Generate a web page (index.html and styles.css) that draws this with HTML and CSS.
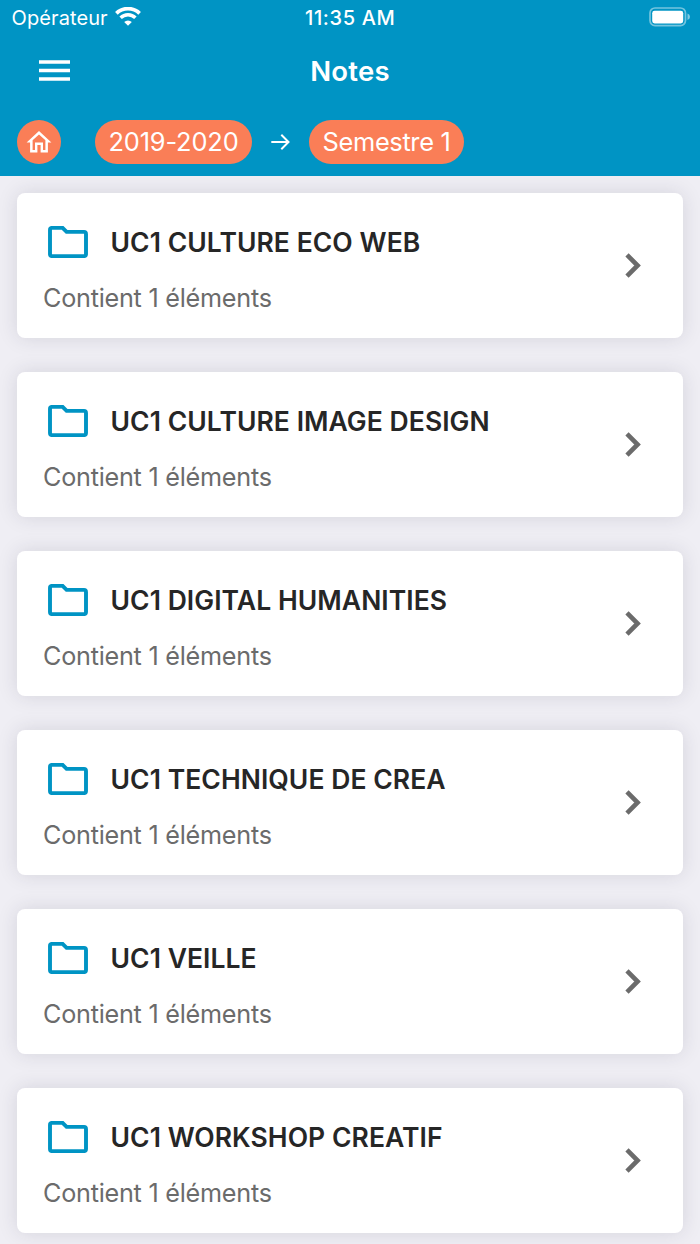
FILE: index.html
```html
<!DOCTYPE html>
<html lang="fr">
<head>
<meta charset="utf-8">
<title>Notes</title>
<link rel="stylesheet" href="styles.css">
</head>
<body>
<svg width="0" height="0" class="defs" aria-hidden="true">
  <symbol id="folder" viewBox="0 0 40 32">
    <path d="M4 1.9H14.6L18.6 5.9H36Q38 5.9 38 7.9V28.1Q38 30.1 36 30.1H4Q2 30.1 2 28.1V3.9Q2 1.9 4 1.9Z" fill="none" stroke="#0094c4" stroke-width="3.9"/>
  </symbol>
  <symbol id="chevron" viewBox="0 0 16 26">
    <path d="M2 1.9 12.6 12.5 2 23.1" fill="none" stroke="#6b6b6b" stroke-width="4.6"/>
  </symbol>
</svg>
<header class="header">
  <div class="status">
    <div class="carrier"><span class="carrier-name">Opérateur</span>
      <svg class="wifi" width="26" height="19" viewBox="0 0 26 19">
        <path d="M1.4 6.3A16.8 16.8 0 0 1 24.6 6.3" fill="none" stroke="#fff" stroke-width="3.8"/>
        <path d="M5.6 10.8A10.6 10.6 0 0 1 20.4 10.8" fill="none" stroke="#fff" stroke-width="3.5"/>
        <path d="M9.2 14.9A5.5 5.5 0 0 1 16.8 14.9L13 18.8Z" fill="#fff"/>
      </svg>
    </div>
    <div class="time">11:35 AM</div>
    <svg class="battery" width="42" height="20" viewBox="0 0 42 20">
      <rect x="1" y="1" width="35.5" height="17.6" rx="5" fill="none" stroke="#fff" stroke-opacity=".45" stroke-width="1.7"/>
      <rect x="3.2" y="3.8" width="31" height="12.6" rx="2.4" fill="#fff"/>
      <path d="M38.5 6.6Q41 7.6 41 9.8T38.5 13Z" fill="#fff" fill-opacity=".5"/>
    </svg>
  </div>
  <div class="nav">
    <svg class="menu" width="31" height="22" viewBox="0 0 31 22"><path d="M0 2H31M0 10.6H31M0 19.1H31" stroke="#fff" stroke-width="3.5"/></svg>
    <h1 class="page-title">Notes</h1>
  </div>
  <div class="crumbs">
    <div class="home">
      <svg width="26" height="22" viewBox="0 0 26 22"><path fill="#fff" fill-rule="evenodd" d="M13 0 25.4 11.4H21.9V21.6H14.6V14H11.4V21.6H4.1V11.4H.6ZM13 3.4 6.6 9.2V19.1H9V11.6H17V19.1H19.4V9.2Z"/></svg>
    </div>
    <div class="pill year">2019-2020</div>
    <svg class="arrow" width="19" height="16" viewBox="0 0 19 16"><path d="M.3 8H17.5M10.3 .8 17.5 8 10.3 15.2" fill="none" stroke="#fff" stroke-width="2"/></svg>
    <div class="pill semester">Semestre 1</div>
  </div>
</header>
<main class="list">
  <article class="card"><div class="body"><div class="head"><svg class="folder"><use href="#folder"/></svg><h2 class="name">UC1 CULTURE ECO WEB</h2></div><p class="count">Contient 1 éléments</p></div><svg class="chevron"><use href="#chevron"/></svg></article>
  <article class="card"><div class="body"><div class="head"><svg class="folder"><use href="#folder"/></svg><h2 class="name">UC1 CULTURE IMAGE DESIGN</h2></div><p class="count">Contient 1 éléments</p></div><svg class="chevron"><use href="#chevron"/></svg></article>
  <article class="card"><div class="body"><div class="head"><svg class="folder"><use href="#folder"/></svg><h2 class="name">UC1 DIGITAL HUMANITIES</h2></div><p class="count">Contient 1 éléments</p></div><svg class="chevron"><use href="#chevron"/></svg></article>
  <article class="card"><div class="body"><div class="head"><svg class="folder"><use href="#folder"/></svg><h2 class="name">UC1 TECHNIQUE DE CREA</h2></div><p class="count">Contient 1 éléments</p></div><svg class="chevron"><use href="#chevron"/></svg></article>
  <article class="card"><div class="body"><div class="head"><svg class="folder"><use href="#folder"/></svg><h2 class="name">UC1 VEILLE</h2></div><p class="count">Contient 1 éléments</p></div><svg class="chevron"><use href="#chevron"/></svg></article>
  <article class="card"><div class="body"><div class="head"><svg class="folder"><use href="#folder"/></svg><h2 class="name">UC1 WORKSHOP CREATIF</h2></div><p class="count">Contient 1 éléments</p></div><svg class="chevron"><use href="#chevron"/></svg></article>
</main>
</body>
</html>
```

FILE: styles.css
```css
* { box-sizing: border-box; }
body {
  margin: 0;
  height: 1244px;
  overflow: hidden;
  background: #efeef4;
  font-family: Inter, "Liberation Sans", sans-serif;
  color: #262626;
}
h1, h2, p { margin: 0; white-space: nowrap; }
.defs { display: block; }
.header { height: 176px; background: #0094c4; color: #fff; }
.status {
  display: grid;
  grid-template-columns: 1fr auto 1fr;
  height: 36px;
  padding: 0 9px 0 11.5px;
}
.carrier { display: flex; align-items: flex-start; gap: 7px; font-size: 20px; line-height: 36px; }
.carrier-name { letter-spacing: 0.1px; }
.wifi { margin-top: 7px; }
.time { margin-right: 2px; font-size: 20px; font-weight: 500; line-height: 36px; letter-spacing: 0.65px; }
.battery { justify-self: end; margin-top: 7px; }
.nav {
  display: grid;
  grid-template-columns: 1fr auto 1fr;
  align-items: center;
  height: 70px;
  padding: 0 39px;
}
.page-title { font-size: 27.5px; font-weight: 600; line-height: 70px; letter-spacing: 0.2px; }
.crumbs { display: flex; align-items: center; height: 44px; margin-top: 14px; padding-left: 17px; }
.home {
  display: flex;
  align-items: center;
  justify-content: center;
  width: 44px;
  height: 44px;
  margin-right: 34px;
  border-radius: 50%;
  background: #fa7e57;
}
.pill {
  height: 44px;
  border-radius: 22px;
  background: #fa7e57;
  font-size: 25.4px;
  line-height: 44px;
  text-align: center;
  white-space: nowrap;
}
.year { width: 157px; letter-spacing: -0.15px; }
.semester { width: 155px; letter-spacing: -0.35px; }
.arrow { margin: 0 19px; }
.list { display: flex; flex-direction: column; gap: 34px; padding: 17px; }
.card {
  display: flex;
  align-items: center;
  justify-content: space-between;
  flex: none;
  height: 145px;
  padding: 0 42px 0 26px;
  border-radius: 8px;
  background: #fff;
  box-shadow: 0 0 20px rgba(40, 40, 60, 0.13);
}
.body { height: 145px; padding-top: 29px; }
.head { display: flex; align-items: center; gap: 22.5px; height: 40px; padding-left: 5px; }
.folder { width: 40px; height: 32px; }
.name { font-size: 26.5px; font-weight: 600; line-height: 40px; letter-spacing: 0.06px; }
.count { margin-top: 16px; font-size: 25.2px; line-height: 40px; letter-spacing: -0.24px; color: #6b6b6b; }
.chevron { width: 16px; height: 26px; }
```
